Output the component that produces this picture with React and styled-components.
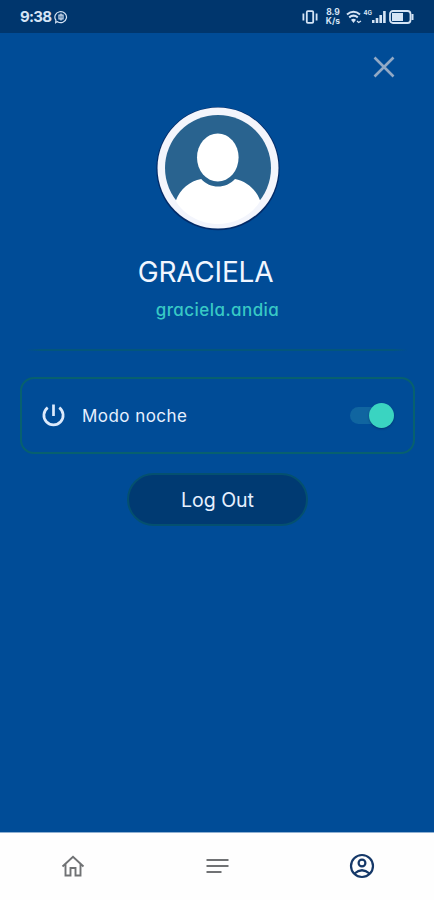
import React, { useState } from 'react';
import styled, { createGlobalStyle } from 'styled-components';

const GlobalStyle = createGlobalStyle`
  * {
    box-sizing: border-box;
  }
  body {
    margin: 0;
    background: #004c97;
    font-family: Inter, "Open Sans", sans-serif;
    font-feature-settings: "cv11";
  }
  button {
    font: inherit;
    font-feature-settings: inherit;
    border: none;
    background: transparent;
    padding: 0;
    cursor: pointer;
  }
  svg {
    display: block;
    flex: none;
  }
`;

const Screen = styled.div`
  width: 434px;
  height: 900px;
  display: flex;
  flex-direction: column;
  background: #004c97;
  overflow: hidden;
`;

const StatusBar = styled.header`
  height: 33px;
  flex: none;
  display: flex;
  align-items: center;
  justify-content: space-between;
  padding: 0 20px;
  background: #00366d;
  color: #d5e4f5;
`;

const StatusGroup = styled.div`
  display: flex;
  align-items: center;
  gap: 3px;
`;

const Clock = styled.span`
  font-size: 15px;
  font-weight: 700;
  line-height: 18px;
  letter-spacing: -0.75px;
`;

const Speed = styled.span`
  width: 15px;
  margin: 0 3px 0 4px;
  display: flex;
  flex-direction: column;
  font-size: 8.5px;
  font-weight: 700;
  line-height: 9px;
  text-align: center;
`;

const Network = styled.span`
  align-self: flex-start;
  margin: 1px -3px 0 -2px;
  font-size: 6px;
  font-weight: 700;
  line-height: 8px;
`;

const Content = styled.main`
  flex: 1;
  display: flex;
  flex-direction: column;
  align-items: center;
  padding: 20px 20px 0;
`;

const CloseButton = styled.button`
  align-self: flex-end;
  margin-right: 16px;
`;

const Avatar = styled.div`
  margin-top: 24px;
  margin-left: 1px;
`;

const Name = styled.h1`
  margin: 21px 23px 0 0;
  font-size: 28px;
  font-weight: 400;
  line-height: 40px;
  letter-spacing: -0.2px;
  color: #f1f6ff;
`;

const Username = styled.p`
  margin: 5px 0 0 1px;
  font-size: 17px;
  font-weight: 500;
  line-height: 26px;
  letter-spacing: 0.45px;
  color: #38c9c5;
`;

const Divider = styled.hr`
  width: 382px;
  height: 2px;
  margin: 26px 0 0;
  border: none;
  background: linear-gradient(90deg, transparent, #03567b 4%, #03567b 96%, transparent);
`;

const Card = styled.section`
  width: 395px;
  height: 77px;
  margin: 26px 0 0 1px;
  padding: 0 19px 0 19px;
  display: flex;
  align-items: center;
  border: 2px solid #07606f;
  border-radius: 14px;
`;

const CardLabel = styled.span`
  flex: 1;
  margin-left: 16px;
  font-size: 17px;
  line-height: 24px;
  letter-spacing: 0.45px;
  color: #e6f0ff;
`;

const Track = styled.button`
  width: 44px;
  height: 17px;
  display: flex;
  align-items: center;
  justify-content: ${props => (props.$on ? 'flex-end' : 'flex-start')};
  border-radius: 9px;
  background: ${props => (props.$on ? '#1065a0' : '#3b5f8a')};
`;

const Thumb = styled.span`
  flex: none;
  width: 25px;
  height: 25px;
  border-radius: 50%;
  background: #3ad4c1;
  box-shadow: 0 1px 2px rgba(0, 35, 80, 0.5);
`;

const LogoutButton = styled.button`
  width: 181px;
  height: 53px;
  margin: 19px 0 0 1px;
  border: 2px solid #04506f;
  border-radius: 27px;
  background: #003a72;
  color: #e6f0ff;
  font-size: 19.5px;
`;

const TabBar = styled.nav`
  height: 68px;
  flex: none;
  display: grid;
  grid-template-columns: repeat(3, 1fr);
  padding: 0 0 2px 1px;
  border-top: 1px solid #8fb0d2;
  background: #fefefe;
`;

const Tab = styled.button`
  display: flex;
  align-items: center;
  justify-content: center;
  color: ${props => (props.$active ? '#153868' : '#707274')};
`;

function ChatBadge() {
  return (
    <svg width="14" height="14" viewBox="0 0 14 14" fill="none" stroke="currentColor" strokeWidth="1.2">
      <path d="M2.3 12.1 1.7 12.6 1.9 10.2A5.8 5.5 0 1 1 3.5 11.7Z" />
      <path d="M5 5h4v4H5zM7 3.5v7" />
    </svg>
  );
}

function StatusIcons() {
  return (
    <StatusGroup>
      <svg width="16" height="14" viewBox="0 0 16 14" fill="none" stroke="currentColor" strokeWidth="1.8">
        <rect x="4.8" y="1.2" width="6.4" height="11.6" rx="1" />
        <path d="M1.4 3.5v7M14.6 3.5v7" strokeWidth="1.8" />
      </svg>
      <Speed>
        <span>8.9</span>
        <span>K/s</span>
      </Speed>
      <svg width="16" height="14" viewBox="0 0 16 14" fill="none" stroke="currentColor" strokeWidth="2">
        <path d="M1 4.5Q7.5-1 14 4.5M3.2 7.4q4.3-3.5 8.6 0" />
        <path d="M5 9.8q2.5-2 5 0L7.5 13Z" fill="currentColor" stroke="none" />
        <path d="m11 11 1.7 1.5L15 11" strokeWidth="1.3" />
      </svg>
      <Network>4G</Network>
      <svg width="14" height="13" viewBox="0 0 14 13" fill="currentColor">
        <path d="M0 10h2.5v3H0zM3.7 8h2.6v5H3.7zM7.4 5H10v8H7.4zM11.1 1h2.6v12h-2.6z" />
      </svg>
      <svg width="25" height="14" viewBox="0 0 25 14">
        <rect x="1" y="1" width="20.5" height="12" rx="3" fill="none" stroke="currentColor" strokeWidth="1.8" />
        <rect x="3" y="3" width="11" height="8" fill="currentColor" />
        <path d="M23.5 4v6" stroke="currentColor" strokeWidth="2" />
      </svg>
    </StatusGroup>
  );
}

function ProfilePicture() {
  return (
    <svg width="126" height="126" viewBox="0 0 126 126">
      <circle cx="63" cy="63.6" r="61.7" fill="#032b68" />
      <circle cx="63" cy="63" r="60.5" fill="#f3f5fc" />
      <circle cx="63" cy="63" r="53" fill="#29638f" />
      <path
        d="M20.7 96C25 84 35 76 46.2 74C55 84 71 84 80 74C91 76 101 84 105.3 96C97 110 80 119 63 119C46 119 29 110 20.7 96Z"
        fill="#fff"
      />
      <ellipse cx="62.8" cy="52.5" rx="20.8" ry="24" fill="#fff" />
    </svg>
  );
}

export default function App() {
  const [night, setNight] = useState(true);

  return (
    <Screen>
      <GlobalStyle />
      <StatusBar>
        <StatusGroup>
          <Clock>9:38</Clock>
          <ChatBadge />
        </StatusGroup>
        <StatusIcons />
      </StatusBar>
      <Content>
        <CloseButton aria-label="Close">
          <svg width="28" height="28" viewBox="0 0 28 28" stroke="#91a9c5" strokeWidth="2.6">
            <path d="m4.5 4.5 19 19M23.5 4.5l-19 19" />
          </svg>
        </CloseButton>
        <Avatar>
          <ProfilePicture />
        </Avatar>
        <Name>GRACIELA</Name>
        <Username>graciela.andia</Username>
        <Divider />
        <Card>
          <svg width="25" height="25" viewBox="0 0 26 26" fill="none" stroke="#dceafc" strokeWidth="2.8">
            <path d="M13 1.5v12M7 4.8a10 10 0 1 0 12 0" />
          </svg>
          <CardLabel>Modo noche</CardLabel>
          <Track aria-label="Modo noche" $on={night} onClick={() => setNight(!night)}>
            <Thumb />
          </Track>
        </Card>
        <LogoutButton>Log Out</LogoutButton>
      </Content>
      <TabBar>
        <Tab aria-label="Home">
          <svg width="24" height="24" viewBox="0 0 24 24" fill="none" stroke="currentColor" strokeWidth="1.9">
            <path d="M1.5 12.5 12 2.8l10.5 9.7M4.5 10v11.5h5V14h5v7.5h5V10" />
          </svg>
        </Tab>
        <Tab aria-label="Menu">
          <svg width="24" height="24" viewBox="0 0 24 24" stroke="currentColor" strokeWidth="2">
            <path d="M1.5 6h22M1.5 12h22M1.5 18h15" />
          </svg>
        </Tab>
        <Tab aria-label="Profile" $active>
          <svg width="26" height="26" viewBox="0 0 26 26" fill="none" stroke="currentColor" strokeWidth="2.2">
            <circle cx="13" cy="13" r="11" />
            <circle cx="13" cy="10" r="3.4" />
            <path d="M5.5 20.5q7.5-6.5 15 0" />
          </svg>
        </Tab>
      </TabBar>
    </Screen>
  );
}
